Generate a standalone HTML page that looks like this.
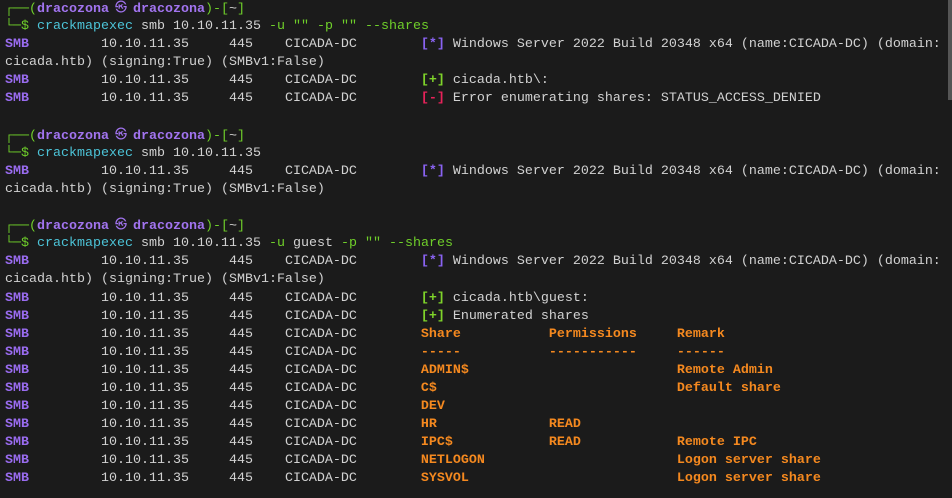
<!DOCTYPE html><html><head><style>
html,body{margin:0;padding:0;background:#1b1b1b;width:952px;height:498px;overflow:hidden}
pre{margin:0;position:absolute;left:5px;top:0px;font-family:"Liberation Mono","DejaVu Sans Mono",monospace;font-size:13.33px;line-height:18.1px;color:#d2d2d2;white-space:pre}
.ln{display:block;height:18.1px;overflow:hidden}
.g{color:#6fcf2a}.p{color:#a274f0;font-weight:bold}.c{color:#4cc4d8}.s{color:#9a6cf0;font-weight:bold}
.bl{color:#8a63f2;font-weight:bold}.gr{color:#7fd42a;font-weight:bold}.r{color:#e8225a;font-weight:bold}.o{color:#f5891f;font-weight:bold}
.k{display:inline-block;width:24px;height:14px;line-height:14px;vertical-align:-2px;overflow:hidden;text-align:center;font-weight:normal;font-size:12px;font-family:"DejaVu Sans",sans-serif}
.sb{position:absolute;right:0;top:0;width:4px;height:100px;background:#555}
</style></head><body><div class="sb"></div><pre><span class="ln"><span class="g">┌──(</span><span class="p">dracozona<span class="k">㉿</span>dracozona</span><span class="g">)-[</span>~<span class="g">]</span></span><span class="g">└─$</span> <span class="c">crackmapexec</span> smb 10.10.11.35 <span class="g">-u</span> <span class="g">""</span> <span class="g">-p</span> <span class="g">""</span> <span class="g">--shares</span>
<span class="s">SMB</span>         10.10.11.35     445    CICADA-DC        <span class="bl">[*]</span> Windows Server 2022 Build 20348 x64 (name:CICADA-DC) (domain:
cicada.htb) (signing:True) (SMBv1:False)
<span class="s">SMB</span>         10.10.11.35     445    CICADA-DC        <span class="gr">[+]</span> cicada.htb\:
<span class="s">SMB</span>         10.10.11.35     445    CICADA-DC        <span class="r">[-]</span> Error enumerating shares: STATUS_ACCESS_DENIED

<span class="ln"><span class="g">┌──(</span><span class="p">dracozona<span class="k">㉿</span>dracozona</span><span class="g">)-[</span>~<span class="g">]</span></span><span class="g">└─$</span> <span class="c">crackmapexec</span> smb 10.10.11.35
<span class="s">SMB</span>         10.10.11.35     445    CICADA-DC        <span class="bl">[*]</span> Windows Server 2022 Build 20348 x64 (name:CICADA-DC) (domain:
cicada.htb) (signing:True) (SMBv1:False)

<span class="ln"><span class="g">┌──(</span><span class="p">dracozona<span class="k">㉿</span>dracozona</span><span class="g">)-[</span>~<span class="g">]</span></span><span class="g">└─$</span> <span class="c">crackmapexec</span> smb 10.10.11.35 <span class="g">-u</span> guest <span class="g">-p</span> <span class="g">""</span> <span class="g">--shares</span>
<span class="s">SMB</span>         10.10.11.35     445    CICADA-DC        <span class="bl">[*]</span> Windows Server 2022 Build 20348 x64 (name:CICADA-DC) (domain:
cicada.htb) (signing:True) (SMBv1:False)
<span class="s">SMB</span>         10.10.11.35     445    CICADA-DC        <span class="gr">[+]</span> cicada.htb\guest:
<span class="s">SMB</span>         10.10.11.35     445    CICADA-DC        <span class="gr">[+]</span> Enumerated shares
<span class="s">SMB</span>         10.10.11.35     445    CICADA-DC        <span class="o">Share           Permissions     Remark</span>
<span class="s">SMB</span>         10.10.11.35     445    CICADA-DC        <span class="o">-----           -----------     ------</span>
<span class="s">SMB</span>         10.10.11.35     445    CICADA-DC        <span class="o">ADMIN$                          Remote Admin</span>
<span class="s">SMB</span>         10.10.11.35     445    CICADA-DC        <span class="o">C$                              Default share</span>
<span class="s">SMB</span>         10.10.11.35     445    CICADA-DC        <span class="o">DEV</span>
<span class="s">SMB</span>         10.10.11.35     445    CICADA-DC        <span class="o">HR              READ</span>
<span class="s">SMB</span>         10.10.11.35     445    CICADA-DC        <span class="o">IPC$            READ            Remote IPC</span>
<span class="s">SMB</span>         10.10.11.35     445    CICADA-DC        <span class="o">NETLOGON                        Logon server share</span>
<span class="s">SMB</span>         10.10.11.35     445    CICADA-DC        <span class="o">SYSVOL                          Logon server share</span>
</pre></body></html>
